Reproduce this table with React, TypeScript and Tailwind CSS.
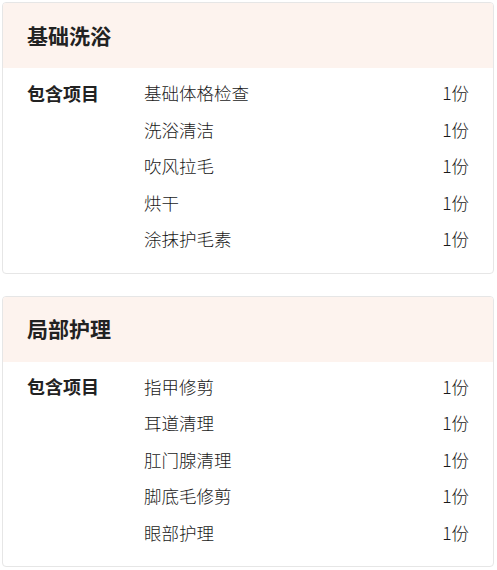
const packages = [
  {
    title: "基础洗浴",
    items: ["基础体格检查", "洗浴清洁", "吹风拉毛", "烘干", "涂抹护毛素"],
  },
  {
    title: "局部护理",
    items: ["指甲修剪", "耳道清理", "肛门腺清理", "脚底毛修剪", "眼部护理"],
  },
];

function PackageCard({ title, items }: { title: string; items: string[] }) {
  return (
    <div className="border border-[#e6e6e6] rounded-[4px] overflow-hidden bg-white">
      <div className="h-[65px] flex items-center px-[24px] bg-[#fdf3ee]">
        <h2 className="text-[21px] font-bold text-[#222]">{title}</h2>
      </div>
      <div className="flex px-[24px] pt-[7px] pb-[15px]">
        <div className="w-[117px] h-[36.5px] flex items-center text-[18px] font-bold text-[#222]">
          包含项目
        </div>
        <div className="flex-1 flex flex-col">
          {items.map((item) => (
            <div
              key={item}
              className="h-[36.5px] flex items-center justify-between text-[17.5px] font-light text-[#1a1a1a]"
            >
              <span>{item}</span>
              <span>1份</span>
            </div>
          ))}
        </div>
      </div>
    </div>
  );
}

export default function App() {
  return (
    <div
      className="min-h-screen bg-white pt-[2px] pl-[2px] pr-[3px] flex flex-col gap-[22px]"
      style={{ fontFamily: '"Noto Sans CJK SC", "Noto Sans", sans-serif' }}
    >
      {packages.map((p) => (
        <PackageCard key={p.title} title={p.title} items={p.items} />
      ))}
    </div>
  );
}
